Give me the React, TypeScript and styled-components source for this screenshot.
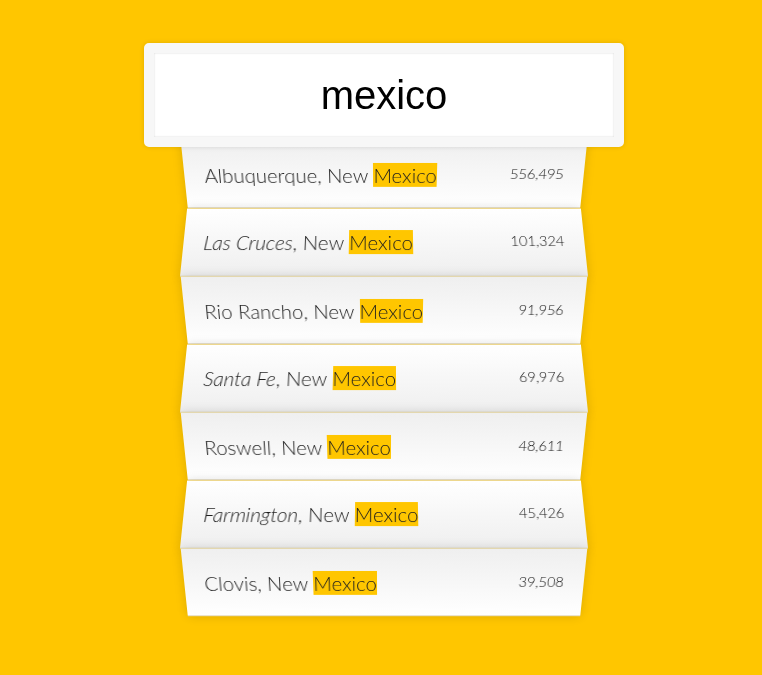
import React from 'react';
import styled, { createGlobalStyle, css } from 'styled-components';

const Global = createGlobalStyle`
  html, body { background: #ffc600; }
  body { margin: 0; }
  * { box-sizing: border-box; }
`;

const Page = styled.div`
  min-height: 675px;
  padding: 34px 0 0 6px;
  font-family: 'Lato', 'Open Sans', sans-serif;
  font-weight: 300;
  font-size: 20.4px;
`;

const Form = styled.form`
  width: 400px;
  margin: 0 auto;
`;

const SearchInput = styled.input`
  display: block;
  width: 480px;
  height: 104px;
  margin: 0 0 0 -40px;
  padding: 0 20px;
  position: relative;
  top: 9px;
  z-index: 2;
  text-align: center;
  outline: 0;
  border: 10px solid #f7f7f7;
  border-radius: 5px;
  background: #fff;
  color: #000;
  font-family: 'Liberation Sans', Arial, sans-serif;
  font-size: 40px;
  box-shadow: 0 0 5px rgba(0, 0, 0, 0.12), inset 0 0 2px rgba(0, 0, 0, 0.19);
`;

const Suggestions = styled.ul`
  margin: 0;
  padding: 0;
  position: relative;
`;

const Item = styled.li<{ $even: boolean }>`
  list-style: none;
  display: flex;
  justify-content: space-between;
  margin: 0;
  padding: 21px 20px 19px;
  line-height: 27px;
  color: #1e1e1e;
  border-bottom: 1px solid #e2d8b8;
  box-shadow: 0 0 10px rgba(0, 0, 0, 0.14);
  ${({ $even }) =>
    $even
      ? css`
          transform: perspective(100px) rotateX(3deg) translateY(2px) scale(1.001);
          background: linear-gradient(to bottom, #ffffff 0%, #efefef 100%);
        `
      : css`
          transform: perspective(100px) rotateX(-3deg) translateY(3px);
          background: linear-gradient(to top, #ffffff 0%, #efefef 100%);
        `}
`;

const Name = styled.span``;

const City = styled.span<{ $italic: boolean }>`
  font-style: ${({ $italic }) => ($italic ? 'italic' : 'normal')};
`;

const Hl = styled.span`
  background: #ffc600;
`;

const Population = styled.span`
  font-size: 14.5px;
  line-height: 24px;
  color: #111;
`;

const data = [
  { city: 'Albuquerque', pop: '556,495' },
  { city: 'Las Cruces', pop: '101,324' },
  { city: 'Rio Rancho', pop: '91,956' },
  { city: 'Santa Fe', pop: '69,976' },
  { city: 'Roswell', pop: '48,611' },
  { city: 'Farmington', pop: '45,426' },
  { city: 'Clovis', pop: '39,508' },
];

export default function App() {
  return (
    <Page>
      <Global />
      <Form onSubmit={(e) => e.preventDefault()}>
        <SearchInput type="text" defaultValue="mexico" />
        <Suggestions>
          {data.map((d, i) => {
            const even = i % 2 === 1;
            return (
              <Item key={d.city} $even={even}>
                <Name>
                  <City $italic={even}>{d.city}</City>, New <Hl>Mexico</Hl>
                </Name>
                <Population>{d.pop}</Population>
              </Item>
            );
          })}
        </Suggestions>
      </Form>
    </Page>
  );
}
